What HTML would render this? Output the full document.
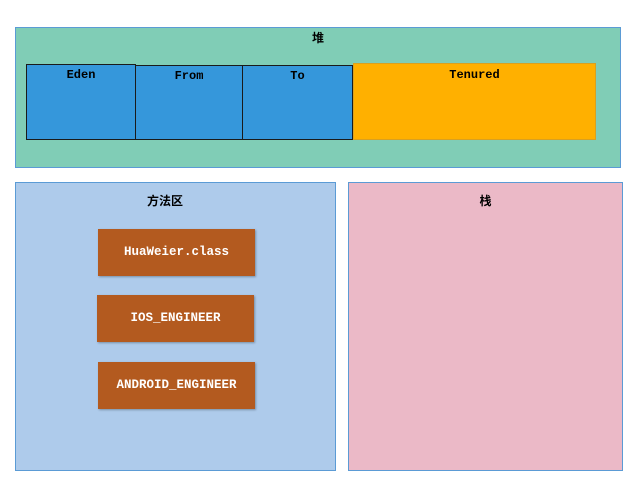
<!DOCTYPE html>
<html><head><meta charset="utf-8"><style>
body{margin:0;width:642px;height:492px;background:#fff;position:relative;overflow:hidden;font-family:"Liberation Mono","Noto Sans CJK SC",monospace;font-weight:bold;font-size:12px;}
div{position:absolute;box-sizing:border-box;}
.t{text-align:center;color:#000;}
.b{background:#3597db;border:1px solid #1a1a1a;padding-top:3px;}
.r{background:#b35a1f;color:#fff;text-align:center;line-height:47px;box-shadow:1px 1px 2px rgba(0,0,0,.3);font-size:12.5px;}
</style></head><body>
<div style="left:15px;top:27px;width:606px;height:141px;background:#80cdb6;border:1px solid #5b9bd5;"></div>
<div class="t" style="left:15px;top:29px;width:606px;font-family:'Noto Sans CJK SC',sans-serif;font-size:12px;">堆</div>
<div class="b t" style="left:26px;top:64px;width:110px;height:76px;">Eden</div>
<div class="b t" style="left:135px;top:65px;width:108px;height:75px;">From</div>
<div class="b t" style="left:242px;top:65px;width:111px;height:75px;">To</div>
<div class="t" style="left:353px;top:63px;width:243px;height:77px;background:#ffb000;border:1px solid #d9a020;padding-top:4px;">Tenured</div>
<div style="left:15px;top:182px;width:321px;height:289px;background:#aecbeb;border:1px solid #5b9bd5;"></div>
<div class="t" style="left:15px;top:192px;width:300px;font-family:'Noto Sans CJK SC',sans-serif;">方法区</div>
<div style="left:348px;top:182px;width:275px;height:289px;background:#ebb9c7;border:1px solid #5b9bd5;"></div>
<div class="t" style="left:348px;top:192px;width:275px;font-family:'Noto Sans CJK SC',sans-serif;">栈</div>
<div class="r" style="left:98px;top:229px;width:157px;height:47px;">HuaWeier.class</div>
<div class="r" style="left:97px;top:295px;width:157px;height:47px;">IOS_ENGINEER</div>
<div class="r" style="left:98px;top:362px;width:157px;height:47px;">ANDROID_ENGINEER</div>
</body></html>
